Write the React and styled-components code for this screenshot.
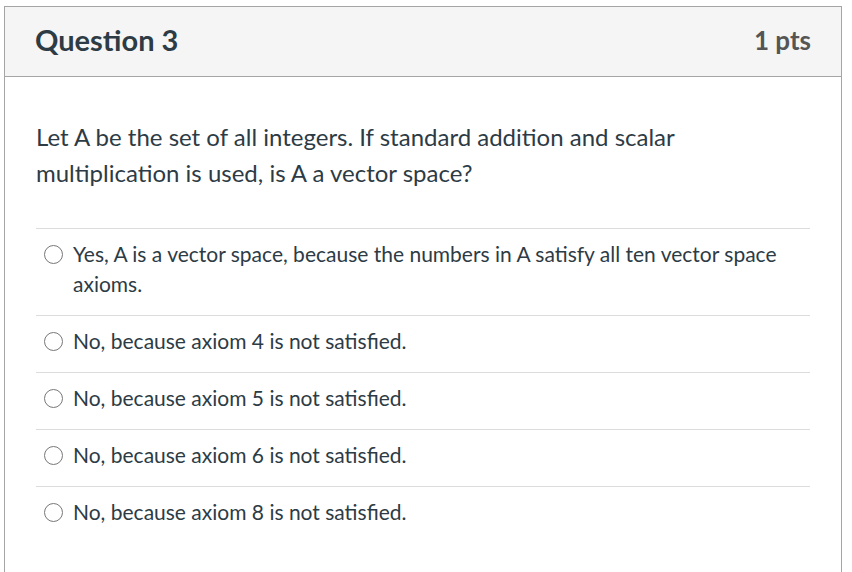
import React from "react";
import styled, { createGlobalStyle } from "styled-components";

const Global = createGlobalStyle`
  html, body { margin: 0; padding: 0; background: #fff; }
  body { font-family: Lato, "Open Sans", sans-serif; color: #2d3b45; }
`;

const Page = styled.div`
  padding: 6px 10px 0 4px;
  width: 852px;
  height: 572px;
  overflow: hidden;
  box-sizing: border-box;
`;

const Card = styled.section`
  width: 838px;
  height: 600px;
  box-sizing: border-box;
  border: 1px solid #a5a5a5;
  border-bottom: none;
`;

const Header = styled.header`
  display: flex;
  align-items: center;
  justify-content: space-between;
  height: 70px;
  box-sizing: border-box;
  padding: 0 30px 4px 30px;
  background: #f5f5f5;
  border-bottom: 1px solid #a5a5a5;
`;

const Title = styled.h2`
  margin: 0;
  font-size: 29px;
  font-weight: 700;
  color: #2d3b45;
`;

const Points = styled.div`
  font-size: 26px;
  font-weight: 700;
  color: #555;
`;

const Body = styled.div`
  padding: 42px 31px 0 31px;
`;

const Prompt = styled.p`
  margin: 0 0 37px 0;
  font-size: 24px;
  line-height: 36px;
  color: #2d3b45;
`;

const Answers = styled.div`
  display: flex;
  flex-direction: column;
`;

const Answer = styled.label`
  display: flex;
  align-items: flex-start;
  gap: 10px;
  padding: 10px 0 16px 8px;
  border-top: 1px solid #dcdcdc;
  font-size: 21px;
  line-height: 30px;
  color: #2d3b45;
`;

const Radio = styled.span`
  flex: none;
  width: 19px;
  height: 19px;
  margin-top: 6px;
  border: 1.5px solid #777;
  border-radius: 50%;
  box-sizing: border-box;
  background: #fff;
`;

const answers = [
  "Yes, A is a vector space, because the numbers in A satisfy all ten vector space axioms.",
  "No, because axiom 4 is not satisfied.",
  "No, because axiom 5 is not satisfied.",
  "No, because axiom 6 is not satisfied.",
  "No, because axiom 8 is not satisfied.",
];

export default function App() {
  return (
    <Page>
      <Global />
      <Card>
        <Header>
          <Title>Question 3</Title>
          <Points>1 pts</Points>
        </Header>
        <Body>
          <Prompt>
            Let A be the set of all integers. If standard addition and scalar multiplication is used, is A a vector space?
          </Prompt>
          <Answers>
            {answers.map((a) => (
              <Answer key={a}>
                <Radio />
                <span>{a}</span>
              </Answer>
            ))}
          </Answers>
        </Body>
      </Card>
    </Page>
  );
}
